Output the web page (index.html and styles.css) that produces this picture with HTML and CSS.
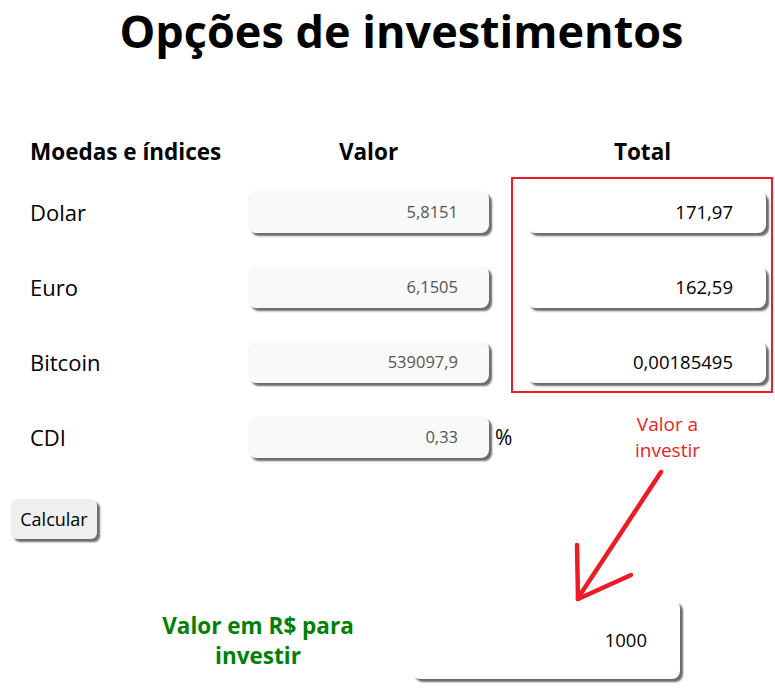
FILE: index.html
```html
<!DOCTYPE html>
<html lang="pt-BR">
<head>
<meta charset="utf-8">
<title>Opções de investimentos</title>
<link rel="stylesheet" href="styles.css">
</head>
<body>
<div class="page">
  <h1 class="title">Opções de investimentos</h1>
  <div class="grid">
    <div class="head head-left r1">Moedas e índices</div>
    <div class="head head-center c2 r1">Valor</div>
    <div class="head head-center head-total c3 r1">Total</div>

    <div class="highlight"></div>

    <div class="label c1 r2">Dolar</div>
    <div class="cell c2 r2"><input class="field ro" value="5,8151" readonly></div>
    <div class="cell c3 r2"><input class="field tot" value="171,97" readonly></div>

    <div class="label c1 r3">Euro</div>
    <div class="cell c2 r3"><input class="field ro" value="6,1505" readonly></div>
    <div class="cell c3 r3"><input class="field tot" value="162,59" readonly></div>

    <div class="label c1 r4">Bitcoin</div>
    <div class="cell c2 r4"><input class="field ro" value="539097,9" readonly></div>
    <div class="cell c3 r4"><input class="field tot" value="0,00185495" readonly></div>

    <div class="label c1 r5">CDI</div>
    <div class="cell c2 r5"><input class="field ro" value="0,33" readonly><span class="pct">%</span></div>
    <div class="note c3 r5">Valor a<br>investir</div>
  </div>

  <button class="calc">Calcular</button>

  <div class="invest">
    <div class="invest-label">Valor em R$ para<br>investir</div>
    <input class="field big" value="1000">
  </div>

  <svg class="arrow" width="775" height="691" viewBox="0 0 775 691">
    <g stroke="#ed1c24" stroke-width="4.5" stroke-linecap="round" fill="none">
      <line x1="661" y1="472" x2="578" y2="598"/>
      <line x1="577" y1="545" x2="578" y2="599"/>
      <line x1="631" y1="575" x2="578" y2="599"/>
    </g>
  </svg>
</div>
</body>
</html>
```

FILE: styles.css
```css
html, body {
  margin: 0;
  padding: 0;
  background: #ffffff;
}

body {
  font-family: "Open Sans", "Noto Sans", "DejaVu Sans", sans-serif;
  color: #000;
}

.page {
  position: relative;
  width: 775px;
  height: 691px;
  overflow: hidden;
  padding: 8px;
  box-sizing: border-box;
}

.title {
  margin: 0;
  height: 120px;
  padding-left: 28px;
  box-sizing: border-box;
  font-size: 45px;
  font-weight: 700;
  line-height: 46px;
  text-align: center;
}

.grid {
  display: grid;
  grid-template-columns: 218px 279px 241px;
  grid-template-rows: 46px repeat(4, 75px);
  padding-left: 22px;
}

.c1 { grid-column: 1; }
.c2 { grid-column: 2; }
.c3 { grid-column: 3; }
.r1 { grid-row: 1; }
.r2 { grid-row: 2; }
.r3 { grid-row: 3; }
.r4 { grid-row: 4; }
.r5 { grid-row: 5; }

.head {
  font-size: 22.5px;
  font-weight: 700;
  align-self: center;
}

.head-left {
  grid-column: 1;
  white-space: nowrap;
}

.head-center {
  width: 241px;
  text-align: center;
}

.head-total {
  padding-right: 10px;
  box-sizing: border-box;
}

.label {
  font-size: 22px;
  align-self: center;
}

.cell {
  display: flex;
  align-items: center;
}

.highlight {
  grid-column: 3;
  grid-row: 2 / 5;
  margin: 3px -5px 6px -16px;
  border: 2px solid #ed1c24;
}

.field {
  width: 241px;
  height: 42px;
  box-sizing: border-box;
  border: none;
  border-radius: 8px;
  background: #ffffff;
  box-shadow: 3px 3px 2px #6b6b6b;
  padding: 0 31px 0 8px;
  text-align: right;
  font-family: inherit;
  font-size: 16.5px;
  color: #000;
  outline: none;
}

.field.ro {
  background: #f9f9f9;
  color: #555;
}

.field.tot {
  width: 239px;
  padding-right: 33px;
  font-size: 18.5px;
}

.pct {
  font-size: 21px;
  margin-left: 6px;
}

.note {
  align-self: center;
  padding-left: 40px;
  text-align: center;
  color: #ed1c24;
  font-size: 19px;
  line-height: 26px;
}

.calc {
  display: block;
  margin: 25px 0 0 3px;
  width: 86px;
  height: 40px;
  border: none;
  border-radius: 6px;
  background: #efefef;
  box-shadow: 3px 3px 2px #6b6b6b;
  font-family: inherit;
  font-size: 18px;
  color: #000;
  padding: 0;
}

.invest {
  display: flex;
  align-items: center;
  margin-top: 61px;
  padding-left: 132px;
  gap: 36px;
}

.invest-label {
  width: 236px;
  text-align: center;
  color: #008000;
  font-size: 22.5px;
  font-weight: 700;
  line-height: 30px;
  margin-top: 2px;
}

.field.big {
  width: 268px;
  height: 79px;
  padding-right: 33px;
  font-size: 18.5px;
}

.arrow {
  position: absolute;
  left: 0;
  top: 0;
  pointer-events: none;
}
```
